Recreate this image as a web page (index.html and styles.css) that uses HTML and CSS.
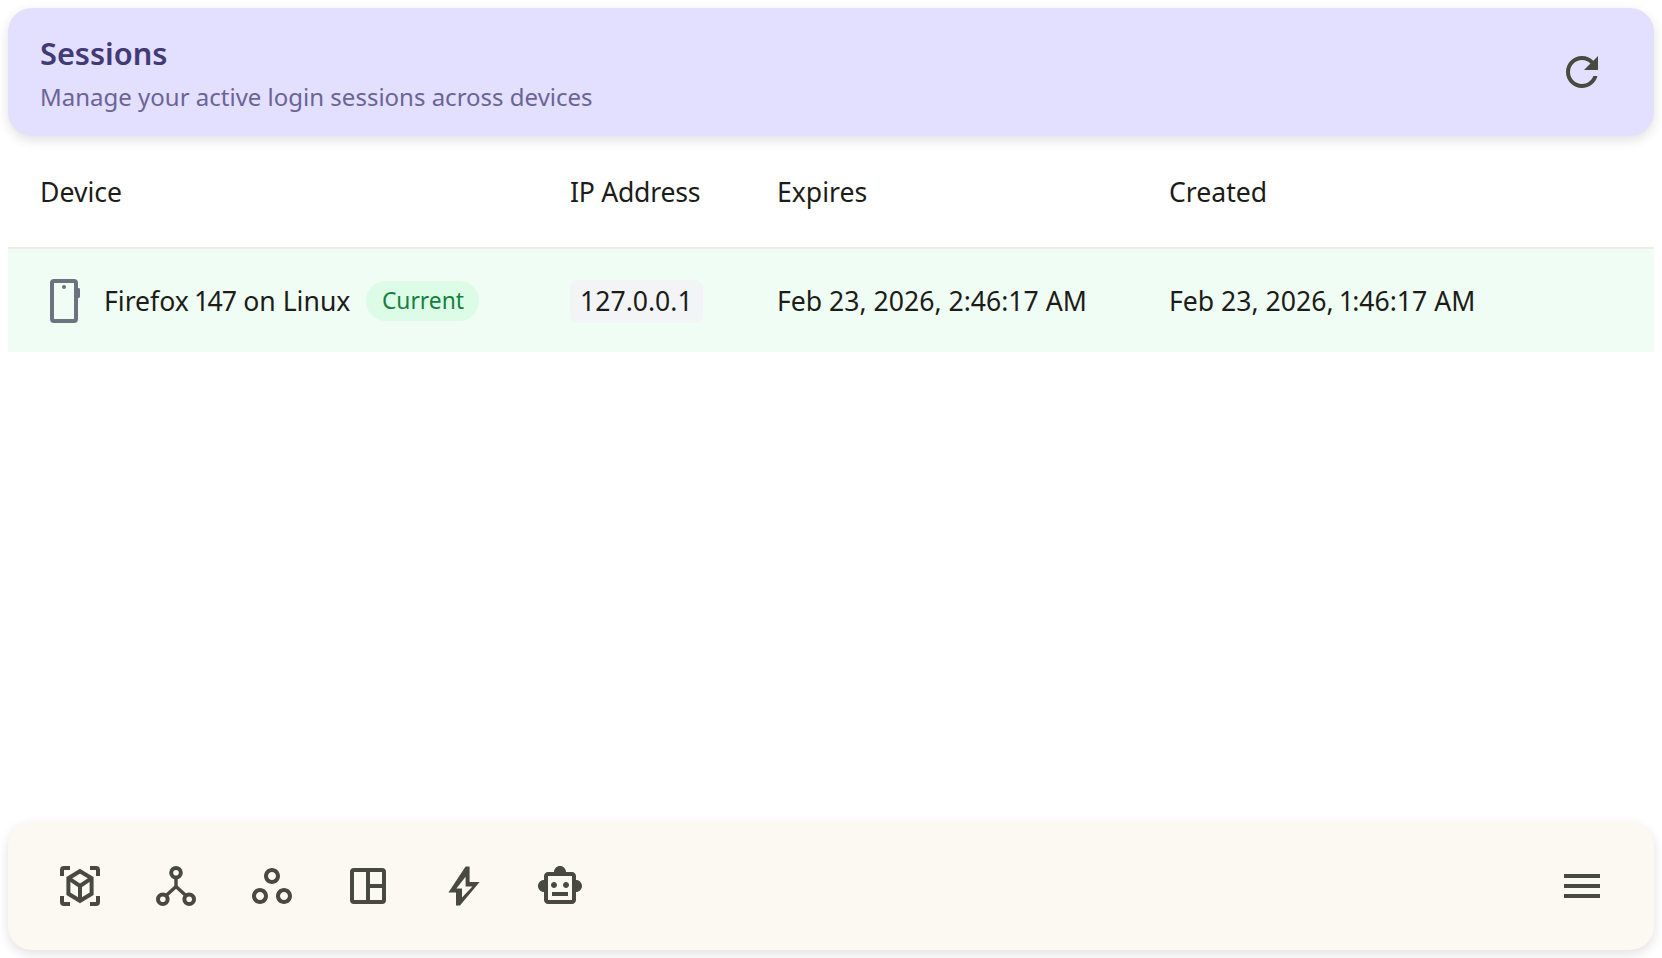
FILE: index.html
```html
<!DOCTYPE html>
<html lang="en">
<head>
<meta charset="utf-8">
<title>Sessions</title>
<link rel="stylesheet" href="styles.css">
</head>
<body>
<div class="app">
  <header class="top-bar">
    <div class="titles">
      <h1 class="title">Sessions</h1>
      <p class="subtitle">Manage your active login sessions across devices</p>
    </div>
    <button class="icon-btn" aria-label="Refresh">
      <svg class="icon" viewBox="0 0 24 24"><path d="M17.65 6.35C16.2 4.9 14.21 4 12 4c-4.42 0-7.99 3.58-7.99 8s3.57 8 7.99 8c3.73 0 6.84-2.55 7.73-6h-2.08c-.82 2.33-3.04 4-5.65 4-3.31 0-6-2.69-6-6s2.69-6 6-6c1.66 0 3.14.69 4.22 1.78L13 11h7V4l-2.35 2.35z"/></svg>
    </button>
  </header>

  <main class="table">
    <div class="row head">
      <div>Device</div>
      <div class="tight">IP Address</div>
      <div>Expires</div>
      <div>Created</div>
    </div>
    <div class="row current">
      <div class="device">
        <svg class="icon device-icon" viewBox="0 0 24 24">
          <rect class="phone-body" x="6" y="2.5" width="12" height="20" rx="1"/>
          <circle cx="12" cy="5.5" r="1"/>
          <rect x="18.5" y="6" width="1.5" height="5" rx=".7"/>
        </svg>
        <span class="pnum">Firefox 147 on Linux</span>
        <span class="badge">Current</span>
      </div>
      <div><span class="ip">127.0.0.1</span></div>
      <div>Feb 23, 2026, 2:46:17 AM</div>
      <div>Feb 23, 2026, <span class="pnum">1</span>:46:17 AM</div>
    </div>
  </main>

  <footer class="bottom-bar">
    <nav class="nav">
      <button class="icon-btn" aria-label="Objects">
        <svg class="icon" viewBox="0 0 24 24">
          <path d="M2 7V4a2 2 0 0 1 2-2h3v2H4v3H2zM17 2h3a2 2 0 0 1 2 2v3h-2V4h-3V2zM2 17h2v3h3v2H4a2 2 0 0 1-2-2v-3zM20 17h2v3a2 2 0 0 1-2 2h-3v-2h3v-3z"/>
          <path class="line" d="M12 4.6l5.8 3.5v7.8L12 19.4l-5.8-3.5V8.1zM6.2 8.1L12 12l5.8-3.9M12 12v7.4"/>
        </svg>
      </button>
      <button class="icon-btn" aria-label="Graph">
        <svg class="icon" viewBox="0 0 24 24">
          <circle class="line" cx="12" cy="5.4" r="2.4"/>
          <circle class="line" cx="5.4" cy="18.6" r="2.4"/>
          <circle class="line" cx="18.6" cy="18.6" r="2.4"/>
          <path class="line thin" d="M12 7.8v4.4M12 12.2l-4.9 4.6M12 12.2l4.9 4.6"/>
        </svg>
      </button>
      <button class="icon-btn" aria-label="Workspaces">
        <svg class="icon" viewBox="0 0 24 24"><path d="M6 13c-2.2 0-4 1.8-4 4s1.8 4 4 4 4-1.8 4-4-1.8-4-4-4zm0 6c-1.1 0-2-.9-2-2s.9-2 2-2 2 .9 2 2-.9 2-2 2zm6-16C9.8 3 8 4.8 8 7s1.8 4 4 4 4-1.8 4-4-1.8-4-4-4zm0 6c-1.1 0-2-.9-2-2s.9-2 2-2 2 .9 2 2-.9 2-2 2zm6 4c-2.2 0-4 1.8-4 4s1.8 4 4 4 4-1.8 4-4-1.8-4-4-4zm0 6c-1.1 0-2-.9-2-2s.9-2 2-2 2 .9 2 2-.9 2-2 2z"/></svg>
      </button>
      <button class="icon-btn" aria-label="Dashboard">
        <svg class="icon" viewBox="0 0 24 24">
          <rect class="line" x="4" y="4" width="16" height="16" rx="1"/>
          <path class="line" d="M12 4v16M12 12h8"/>
        </svg>
      </button>
      <button class="icon-btn" aria-label="Flash">
        <svg class="icon" viewBox="0 0 24 24"><path fill-rule="evenodd" d="M12.8 2.2h2v7.8h5L10 21.8H8v-6.6H4.2zM12.8 7.4L8.2 13.2H11v4.6l5.2-5.6h-3.4z"/></svg>
      </button>
      <button class="icon-btn" aria-label="Assistant">
        <svg class="icon" viewBox="0 0 24 24"><path d="M20 9V7c0-1.1-.9-2-2-2h-3c0-1.66-1.34-3-3-3S9 3.34 9 5H6c-1.1 0-2 .9-2 2v2c-1.66 0-3 1.34-3 3s1.34 3 3 3v4c0 1.1.9 2 2 2h12c1.1 0 2-.9 2-2v-4c1.66 0 3-1.34 3-3s-1.34-3-3-3zm-2 10H6V7h12v12zm-9-6c-.83 0-1.5-.67-1.5-1.5S8.17 10 9 10s1.5.67 1.5 1.5S9.83 13 9 13zm7.5-1.5c0 .83-.67 1.5-1.5 1.5s-1.5-.67-1.5-1.5.67-1.5 1.5-1.5 1.5.67 1.5 1.5zM8 15h8v2H8v-2z"/></svg>
      </button>
    </nav>
    <button class="icon-btn" aria-label="Menu">
      <svg class="icon" viewBox="0 0 24 24"><path d="M3 18h18v-2H3v2zm0-5h18v-2H3v2zm0-7v2h18V6H3z"/></svg>
    </button>
  </footer>
</div>
</body>
</html>
```

FILE: styles.css
```css
* { box-sizing: border-box; }
html, body { height: 100%; }
body {
  margin: 0;
  background: #fff;
  color: #1c1c18;
  font-family: "Noto Sans", sans-serif;
}
.app {
  height: 100%;
  padding: 8px;
  display: flex;
  flex-direction: column;
}
.top-bar, .bottom-bar {
  display: flex;
  align-items: center;
  justify-content: space-between;
  border-radius: 24px;
  box-shadow: 0 4px 12px rgba(0, 0, 0, 0.12);
  flex: none;
  height: 128px;
}
.top-bar {
  padding: 0 48px 0 32px;
  background: #e3dfff;
}
.titles { display: flex; flex-direction: column; gap: 6px; padding-top: 4px; }
.title { margin: 0; font-size: 30.7px; line-height: 40px; font-weight: 600; color: #423a74; }
.subtitle { margin: 0; font-size: 24px; line-height: 36px; color: #6b6494; }
.icon-btn {
  width: 48px;
  height: 48px;
  padding: 0;
  border: 0;
  background: none;
  display: block;
}
.icon { width: 48px; height: 48px; display: block; fill: #484a3f; }
.line { fill: none; stroke: #484a3f; stroke-width: 2; }
.thin { stroke-width: 1.7; }
.table { flex: 1; font-size: 26.6px; }
.row {
  display: grid;
  grid-template-columns: 530px 207px 392px 1fr;
  padding-left: 32px;
  align-items: center;
}
.head { height: 113px; padding-top: 1px; border-bottom: 2px solid #eeece6; }
.tight { letter-spacing: -0.25px; }
.current { height: 103px; padding-top: 1px; background: #f0fdf4; }
.pnum { font-variant-numeric: proportional-nums; }
.device { display: flex; align-items: center; }
.device-icon { fill: #6b7280; margin: -2px 16px 0 0; }
.phone-body { fill: none; stroke: #6b7280; stroke-width: 2; }
.badge {
  margin-left: 16px;
  height: 40px;
  padding: 0 15.5px;
  border-radius: 20px;
  background: #dcfce7;
  color: #15803d;
  font-size: 22.8px;
  line-height: 40px;
}
.ip {
  display: inline-block;
  height: 43px;
  line-height: 43px;
  padding: 0 10px;
  border-radius: 8px;
  background: #f3f4f6;
}
.bottom-bar {
  padding: 0 48px;
  background: #fcf9f2;
}
.nav { display: flex; gap: 48px; }
```
